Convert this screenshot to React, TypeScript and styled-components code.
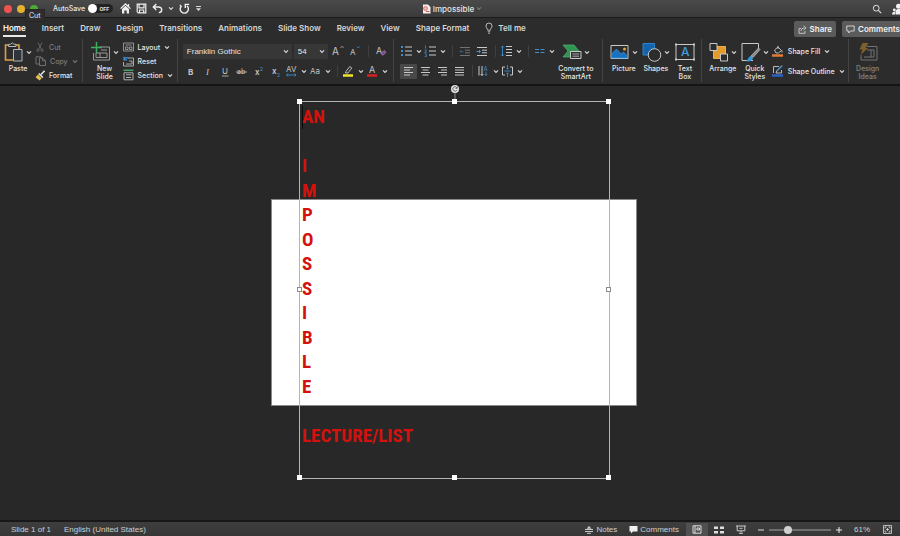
import React from "react";
import styled, { createGlobalStyle, css } from "styled-components";

const Global = createGlobalStyle`
  * { box-sizing: border-box; }
  html, body { margin: 0; background: #282828; }
  body { font-family: Inter, "Liberation Sans", sans-serif; font-size: 8px; color: #e6e6e6; overflow: hidden; }
  button, select, input { font: inherit; color: inherit; margin: 0; }
`;

const plainButton = css`
  border: 0;
  padding: 0;
  background: none;
  display: flex;
  align-items: center;
`;

const Window = styled.div`
  display: flex;
  flex-direction: column;
  height: 100vh;
`;

/* ---------- title bar ---------- */
const TitleBar = styled.header`
  display: grid;
  grid-template-columns: 1fr auto 1fr;
  align-items: center;
  height: 18px;
  flex: none;
  padding-left: 4px;
  background: linear-gradient(#4a4a4a, #3b3b3b);
  border-bottom: 1px solid #1b1b1b;
`;
const TitleLeft = styled.div`
  display: flex;
  align-items: center;
  gap: 5px;
`;
const Lights = styled.div`
  position: relative;
  display: flex;
  gap: 5px;
  margin-right: 10px;
`;
const Light = styled.button<{ $color: string }>`
  ${plainButton}
  width: 8px;
  height: 8px;
  border-radius: 50%;
  background: ${(p) => p.$color};
`;
const Tooltip = styled.span`
  position: absolute;
  z-index: 2;
  left: 21px;
  top: 4px;
  padding: 0 3px;
  font-size: 7px;
  line-height: 11px;
  background: #2e2e2e;
  border: 1px solid #262626;
  color: #eee;
`;
const AutoSave = styled.label`
  display: flex;
  align-items: center;
  gap: 3px;
  font-size: 7px;
  font-weight: 500;
  margin-right: 2px;
`;
const Toggle = styled.span`
  position: relative;
  display: flex;
  align-items: center;
  justify-content: flex-end;
  width: 25px;
  height: 9px;
  padding-right: 4px;
  border-radius: 5px;
  background: #222;
  font-size: 5px;
  font-weight: 700;
  input {
    position: absolute;
    inset: 0;
    width: 100%;
    height: 100%;
    opacity: 0;
  }
  &::before {
    content: "";
    position: absolute;
    left: 0;
    top: 0;
    width: 9px;
    height: 9px;
    border-radius: 50%;
    background: #fff;
  }
`;
const IconButton = styled.button`
  ${plainButton}
`;
const DocTitle = styled.h1`
  display: flex;
  align-items: center;
  gap: 2px;
  margin: 0;
  font-size: 8px;
  font-weight: 500;
`;
const TitleRight = styled.div`
  display: flex;
  justify-content: flex-end;
  align-items: center;
  gap: 10px;
`;

/* ---------- tabs ---------- */
const TabBar = styled.nav`
  display: flex;
  align-items: center;
  height: 20px;
  flex: none;
  padding: 2px 0 0 3px;
  gap: 16px;
  background: #2c2c2c;
`;
const Tab = styled.button<{ $active?: boolean }>`
  ${plainButton}
  height: 16px;
  gap: 5px;
  font-weight: 600;
  font-size: 8px;
  white-space: nowrap;
  color: ${(p) => (p.$active ? "#fff" : "#d6d6d6")};
  border-bottom: 2px solid ${(p) => (p.$active ? "#e8e8e8" : "transparent")};
`;
const TabActions = styled.div`
  display: flex;
  gap: 6px;
  margin-left: auto;
`;
const PillButton = styled.button`
  ${plainButton}
  gap: 3px;
  height: 16px;
  padding: 0 4px;
  border-radius: 2px;
  background: #5b5b5b;
  font-weight: 600;
  font-size: 8px;
  color: #f0f0f0;
  &:last-child { padding-right: 0; border-radius: 2px 0 0 2px; }
`;

/* ---------- ribbon ---------- */
const Ribbon = styled.div`
  display: flex;
  height: 48px;
  flex: none;
  background: #2c2c2c;
  border-bottom: 2px solid #151515;
`;
const Group = styled.section<{ $left?: number; $right?: number; $gap?: number }>`
  display: flex;
  align-items: flex-start;
  gap: ${(p) => p.$gap ?? 2}px;
  padding: 2px ${(p) => p.$right ?? 4}px 0 ${(p) => p.$left ?? 6}px;
  & + & { border-left: 1px solid transparent; border-image: linear-gradient(transparent 2px, #444 2px, #444 43px, transparent 43px) 1; }
`;
const BigButton = styled.button<{ $w: number; $dim?: boolean }>`
  ${plainButton}
  flex-direction: column;
  width: ${(p) => p.$w}px;
  padding-top: 2px;
  gap: 3px;
  font-size: 7px;
  font-weight: 500;
  line-height: 8px;
  text-align: center;
  white-space: pre;
  opacity: ${(p) => (p.$dim ? 0.45 : 1)};
`;
const IconRow = styled.span`
  display: flex;
  align-items: center;
  gap: 2px;
`;
const Stack = styled.div`
  display: flex;
  flex-direction: column;
`;
const ToolRows = styled.div`
  display: flex;
  flex-direction: column;
  gap: 4px;
  padding-top: 3px;
`;
const ToolRow = styled.div`
  display: flex;
  align-items: center;
  height: 16px;
`;
const TextButton = styled.button<{ $dim?: boolean }>`
  ${plainButton}
  height: 14px;
  gap: 4px;
  font-size: 7px;
  font-weight: 500;
  white-space: nowrap;
  color: ${(p) => (p.$dim ? "#7d7d7d" : "#e6e6e6")};
`;
const ShapeButton = styled(TextButton)`
  height: 16px;
`;
const ToolButton = styled.button<{ $on?: boolean }>`
  ${plainButton}
  justify-content: center;
  width: 17px;
  height: 15px;
  border-radius: 1px;
  background: ${(p) => (p.$on ? "#484848" : "none")};
`;
const DropTool = styled.button`
  ${plainButton}
  width: 24px;
  height: 15px;
  gap: 3px;
`;
const Sep = styled.i`
  width: 1px;
  height: 12px;
  margin: 0 4px;
  background: #3f3f3f;
`;
const SelectBox = styled.label<{ $w: number }>`
  display: flex;
  align-items: center;
  width: ${(p) => p.$w}px;
  height: 15px;
  margin-right: 2px;
  padding-right: 3px;
  background: #373737;
  select {
    flex: 1;
    min-width: 0;
    height: 15px;
    padding: 0 0 0 4px;
    border: 0;
    appearance: none;
    background: none;
    font: 500 8px "Liberation Sans", sans-serif;
  }
`;

/* ---------- canvas ---------- */
const Canvas = styled.main`
  flex: 1;
  min-height: 0;
  display: flex;
  align-items: center;
  justify-content: center;
  padding: 0 0 1px 8px;
  background: #282828;
`;
const Slide = styled.div`
  position: relative;
  flex: none;
  width: 366px;
  height: 207px;
  background: #fff;
  outline: 1px solid #8a8a8a;
  outline-offset: -1px;
`;
const TextFrame = styled.div`
  position: absolute;
  left: 28px;
  top: -98px;
  width: 311px;
  height: 378px;
  padding: 3px 2px;
  border: 1px solid #b4b4b4;
`;
const Lines = styled.div`
  display: grid;
  grid-template-rows: repeat(14, 1fr);
  align-items: center;
  height: 343px;
  font-family: "Liberation Sans Narrow", "Roboto Condensed", "Liberation Sans", sans-serif;
  font-weight: 700;
  font-size: 19px;
  line-height: 24px;
  color: #d3120e;
`;
const Caret = styled.i`
  position: absolute;
  left: 2px;
  top: 4px;
  width: 1px;
  height: 23px;
  background: #0a0a0a;
`;
const Handle = styled.i<{ $x: number; $y: number }>`
  position: absolute;
  left: ${(p) => p.$x}%;
  top: ${(p) => p.$y}%;
  width: 5px;
  height: 5px;
  margin: -3px 0 0 -3px;
  background: #fff;
  outline: ${(p) => (p.$y === 50 ? "1px solid #8c8c8c" : "none")};
  outline-offset: -1px;
`;
const Rotate = styled.svg`
  position: absolute;
  left: 50%;
  top: -18px;
  margin-left: -5px;
`;

/* ---------- status bar ---------- */
const StatusBar = styled.footer`
  display: flex;
  align-items: center;
  height: 16px;
  flex: none;
  padding: 1px 8px 0 11px;
  font-family: "Liberation Sans", sans-serif;
  font-size: 8px;
  color: #cfcfcf;
  background: linear-gradient(#3e3e3e, #363636);
  border-top: 2px solid #181818;
`;
const StatusText = styled.span`
  margin-right: 13px;
`;
const StatusTools = styled.div`
  display: flex;
  align-items: center;
  margin-left: auto;
`;
const StatusButton = styled.button<{ $gap?: number }>`
  ${plainButton}
  gap: 2px;
  margin-right: ${(p) => p.$gap ?? 0}px;
`;
const ZoomOut = styled(StatusButton)`
  margin-left: 6px;
`;
const ViewButton = styled.button<{ $on?: boolean }>`
  ${plainButton}
  justify-content: center;
  width: 22px;
  height: 13px;
  background: ${(p) => (p.$on ? "#505050" : "none")};
`;
const Zoom = styled.input`
  appearance: none;
  width: 62px;
  height: 9px;
  margin: 0 5px !important;
  background: linear-gradient(#6e6e6e, #6e6e6e) center / 100% 2px no-repeat;
  &::-webkit-slider-thumb {
    appearance: none;
    width: 8px;
    height: 8px;
    border-radius: 50%;
    background: #d0d0d0;
  }
`;
const Percent = styled.span`
  width: 17px;
  margin: 0 12px;
`;

/* ---------- icons ---------- */
type IconProps = { w: number; h: number; children: React.ReactNode };
const Svg = ({ w, h, children }: IconProps) => (
  <svg width={w} height={h} viewBox={`0 0 ${w} ${h}`} fill="none" stroke="#c8c8c8" strokeWidth="1" aria-hidden="true">
    {children}
  </svg>
);
const Chevron = ({ dim }: { dim?: boolean }) => (
  <svg width="6" height="5" viewBox="0 0 6 5" fill="none" stroke={dim ? "#777" : "#d8d8d8"} strokeWidth="1.2" aria-hidden="true">
    <path d="M1 1.300 3 3.300 5 1.300" />
  </svg>
);
const B = "#3d8fd1";

const HomeIcon = () => <Svg w={11} h={11}><path d="M.6 5.6 5.5 1l4.900 4.600M8.500 1v2.500" stroke="#eee" strokeWidth="1.300" /><path d="M2 6 5.500 2.800 9 6v4.500H6.700V7.400H4.300v3.100H2z" fill="#eee" stroke="none" /></Svg>;
const SaveIcon = () => <Svg w={11} h={11}><path d="M1.200 1.200h8.600v8.600H2.200l-1-1zM3 1.200v3.600h5V1.200M3.500 9.800V7h4.200v2.800" stroke="#eee" strokeWidth="1.200" /></Svg>;
const UndoIcon = () => <Svg w={11} h={11}><path d="M4.300 1 1.300 4l3 3M1.500 4h4.800c2 0 3.400 1.200 3.400 2.800S8.500 9.600 6.800 9.600" stroke="#eee" strokeWidth="1.400" /></Svg>;
const RedoIcon = () => <Svg w={11} h={11}><path d="M2.300 3.200A4.100 4.100 0 1 0 8 2.900M6.300 5V1.400h3.900M1 1.800l1.500 2" stroke="#eee" strokeWidth="1.400" /></Svg>;
const MoreIcon = () => <Svg w={7} h={7}><path d="M1 1.500h5" stroke="#ddd" /><path d="M1 3.200h5L3.500 6z" fill="#ddd" stroke="none" /></Svg>;
const FileIcon = () => <Svg w={9} h={10}><path d="M1 .5h5L8.500 3v6.500H1z" fill="#f4eeee" stroke="none" /><circle cx="3.500" cy="4.500" r="2" fill="#efb5b1" stroke="#d65a52" strokeWidth=".7" /><path d="M4 7.500h3.500" stroke="#d65a52" /></Svg>;
const SearchIcon = () => <Svg w={10} h={10}><circle cx="4.200" cy="4.200" r="2.900" stroke="#ddd" /><path d="M6.300 6.300 9.200 9.200" stroke="#ddd" strokeWidth="1.200" /></Svg>;
const PeopleIcon = () => <Svg w={8} h={12}><g fill="#f2f2f2" stroke="none"><circle cx="6.500" cy="3.200" r="2.500" /><path d="M3.500 11.500V8.500c0-2 1.500-2.800 4.500-2.800v5.800z" /><circle cx="2.300" cy="7" r="1.400" /><path d="M0 11.500c0-2 .8-2.800 3-2.800v2.800z" /></g></Svg>;
const BulbIcon = () => <Svg w={8} h={12}><path d="M2.700 8.200C2.700 6.500 1 6 1 4a3 3 0 0 1 6 0c0 2-1.700 2.500-1.700 4.200zM2.700 9.800h2.600M3.200 11.300h1.600" strokeWidth=".9" /></Svg>;
const ShareIcon = () => <Svg w={9} h={9}><path d="M3 3.500H1v4.800h6V6M3 6c.2-2 1.500-3 3.200-3M5.500 1 8 3 5.500 5" stroke="#ddd" strokeWidth=".8" /></Svg>;
const BubbleIcon = () => <Svg w={9} h={9}><path d="M.8 1h7.400v5H4.500L2.800 8V6h-2z" stroke="#ddd" strokeWidth=".9" /></Svg>;

const PasteIcon = () => <Svg w={20} h={20}><path d="M4.500 3H1.500v15h8M12 3h3v4" stroke="#e0a04a" strokeWidth="1.600" /><path d="M4.500 4.500V2.300h2Q8.300-.6 10 2.300h2v2.200z" stroke="#b8b8b8" /><path d="M9.500 7.500h8.500v11.500H9.500z" fill="#30353a" stroke="#a9b5bf" /></Svg>;
const CutIcon = () => <Svg w={10} h={10}><g stroke="#686868" strokeWidth=".9"><path d="M3 .5 6.300 7M7 .5 3.700 7" /><circle cx="3" cy="8.200" r="1.200" /><circle cx="7" cy="8.200" r="1.200" /></g></Svg>;
const CopyIcon = () => <Svg w={11} h={10}><g stroke="#777" strokeWidth=".9"><path d="M4 8H1V.8h5V2M4.500 2h3L10.500 4.800v4.700h-6zM7.500 2v2.800h3" /></g></Svg>;
const BrushIcon = () => <Svg w={10} h={11}><path d="M6 4.500 9.500.8" stroke="#ddd" strokeWidth="1.600" /><path d="m3.800 3.500 4 4" stroke="#e8e8e8" strokeWidth="1.600" /><path d="m3 4.500 3.700 3.800L4.500 10.500.5 7.200z" fill="#e5bd4d" stroke="none" /></Svg>;
const NewSlideIcon = () => <Svg w={20} h={20}><path d="M8 5h10.500v13H2.500V11M10 8h6M5 11h4v4.500H5zM9 11h7v4.500H9" stroke="#999" /><path d="M5.500 0v11M0 5.500h11" stroke="#3fae62" strokeWidth="1.500" /></Svg>;
const LayoutIcon = () => <Svg w={11} h={10}><path d="M.5 1h10v8H.5zM2.500 3h6M2.500 5h2.500v2.500H2.500zM6.500 5H9v2.500H6.500z" stroke="#aaa" strokeWidth=".8" /></Svg>;
const ResetIcon = () => <Svg w={11} h={11}><path d="M5 2h5.500v8H.5V6M6 5h3v3H3" stroke="#aaa" /><path d="M1 .8v3h3M1 3.500C2 1.500 4 1 5.500 2.500" stroke={B} strokeWidth="1.200" /></Svg>;
const SectionIcon = () => <Svg w={11} h={12}><path d="M.5 1.300h10" stroke="#43a868" strokeWidth="1.500" /><path d="M1 3.800h9v7H1zM3 5.800h5.500M3 8.500h5" stroke="#b0b0b0" /></Svg>;

const t = { fill: "#c4c4c4", stroke: "none", fontFamily: "Inter, sans-serif" };
const GrowIcon = () => <Svg w={13} h={12}><text x="0" y="10" fontSize="10" {...t}>A</text><path d="m8.500 2.800 1.500-1.500 1.500 1.500" strokeWidth=".8" /></Svg>;
const ShrinkIcon = () => <Svg w={12} h={12}><text x="1" y="10" fontSize="8" {...t}>A</text><path d="m8 1.500 1.300 1.300 1.300-1.300" stroke="#4f9bd6" strokeWidth=".8" /></Svg>;
const ClearIcon = () => <Svg w={13} h={12}><text x="1" y="9" fontSize="9" {...t}>A</text><path d="m6 8.500 3-3 2 1.800-3 3z" fill="#7a4a86" stroke="#b77cc4" strokeWidth=".8" /></Svg>;
const BoldIcon = () => <Svg w={10} h={11}><text x="2" y="9" fontSize="8" fontWeight="700" {...t}>B</text></Svg>;
const ItalicIcon = () => <Svg w={10} h={11}><text x="3" y="9" fontSize="9" fontStyle="italic" {...t} fontFamily="Liberation Serif, serif">I</text></Svg>;
const UnderIcon = () => <Svg w={10} h={11}><text x="2" y="8" fontSize="8" {...t}>U</text><path d="M2 10h6.500" strokeWidth=".8" /></Svg>;
const StrikeIcon = () => <Svg w={12} h={11}><text x="1" y="8" fontSize="7" {...t}>ab</text><path d="M0 6h11" strokeWidth=".8" /></Svg>;
const SupIcon = () => <Svg w={10} h={11}><text x="1" y="9" fontSize="8" fontWeight="600" {...t}>x</text><text x="6" y="5" fontSize="5" {...t} fill={B}>2</text></Svg>;
const SubIcon = () => <Svg w={10} h={11}><text x="1" y="8" fontSize="8" fontWeight="600" {...t}>x</text><text x="6" y="11" fontSize="5" {...t} fill={B}>2</text></Svg>;
const SpacingIcon = () => <Svg w={13} h={12}><text x="1" y="7" fontSize="8" {...t}>AV</text><path d="M1.500 10h9M3 8.500 1.500 10 3 11.500M9.500 8.500 11 10l-1.500 1.500" stroke={B} strokeWidth=".9" /></Svg>;
const CaseIcon = () => <Svg w={13} h={12}><text x="1" y="9" fontSize="8" {...t}>Aa</text></Svg>;
const HighlightIcon = () => <Svg w={13} h={12}><path d="m4 6.500 3.800-5 2 1.500L6 8H3.500z" strokeWidth=".9" /><path d="M1 10.500h10" stroke="#efe32c" strokeWidth="2.500" /></Svg>;
const FontColorIcon = () => <Svg w={13} h={12}><text x="3" y="8" fontSize="9" {...t}>A</text><path d="M1 10.500h10" stroke="#d91f1f" strokeWidth="2.500" /></Svg>;

const ListIcon = ({ num }: { num?: boolean }) => <Svg w={13} h={12}><path d="M5 2h7M5 6h7M5 10h7" />{num ? <path d="M1.500.5v3M.7 5h1.600v1L.7 7.500h1.800M.7 9h1.600v2.500H.7" stroke={B} strokeWidth=".8" /> : <path d="M1 2h2M1 6h2M1 10h2" stroke={B} strokeWidth="2" />}</Svg>;
const IndentIcon = ({ dim }: { dim?: boolean }) => <Svg w={12} h={11}><g opacity={dim ? 0.45 : 1}><path d="M1 1.500h10M6 4.200h5M6 6.800h5M1 9.500h10" /><path d={dim ? "M4.500 5.500H1M2.500 4 1 5.500 2.500 7" : "M.5 5.500H4.500M3 4l1.500 1.500L3 7"} stroke={B} /></g></Svg>;
const LineSpaceIcon = () => <Svg w={13} h={12}><path d="M6 1.500h6M6 4.500h6M6 7.500h6M6 10.500h6" /><path d="M2.500 1v10M1 2.500 2.500 1 4 2.500M1 9.500 2.500 11 4 9.500" stroke={B} strokeWidth=".9" /></Svg>;
const ColumnsIcon = () => <Svg w={13} h={12}><path d="M2 4.500h4M2 7.500h4M7.500 4.500h4M7.500 7.500h4" stroke={B} /></Svg>;
const AlignIcon = ({ d }: { d: string }) => <Svg w={11} h={11}><path d={d} /></Svg>;
const DirectionIcon = () => <Svg w={13} h={12}><path d="M2 1v9.500M5 1v9.500M3.700 9 5 10.500 6.300 9" /><text x="6.500" y="6" fontSize="6" {...t} fill={B}>A</text><path d="M9 6.500v4M7.800 9 9 10.500l1.200-1.500" stroke={B} strokeWidth=".8" /></Svg>;
const AlignTextIcon = () => <Svg w={13} h={12}><path d="M4 2H1.500v8H4M9 2h2.500v8H9" /><path d="M3.500 6h6M6.500 0v4M5.500 3l1 1.200 1-1.200M6.500 12V8M5.500 9l1-1.200 1 1.200" stroke={B} strokeWidth=".9" /></Svg>;
const SmartArtIcon = () => <Svg w={20} h={20}><path d="M1 3h11l5 6-5 6H1l5-6z" fill="#2f9550" stroke="#4db873" strokeWidth=".7" /><path d="M8.500 9.500h10.500v7H8.500z" fill="#333" /><path d="M10.500 12h6.500M10.500 14.200h6.500" strokeWidth=".8" /></Svg>;

const PictureIcon = () => <Svg w={20} h={20}><path d="M1 3.500h17v13H1z" /><path d="M1.500 16v-4l5-5 4.500 5 2.500-2 4 4v2z" fill="#1971c2" stroke="#3b9ae0" strokeWidth=".7" /><circle cx="14.500" cy="7" r="1.500" fill="#e3a044" stroke="none" /></Svg>;
const ShapesIcon = () => <Svg w={20} h={20}><path d="M1 1.500h11.500v11.500H1z" fill="#1464ad" stroke="#2d83cc" /><circle cx="12.500" cy="13" r="6.300" fill="#2c2c2c" /></Svg>;
const TextBoxIcon = () => <Svg w={20} h={20}><path d="M1 2.500h18v15H1z" /><path d="M0 1.500h2v2H0zM18 1.500h2v2h-2zM0 16.500h2v2H0zM18 16.500h2v2h-2z" fill="#c8c8c8" stroke="none" /><text x="6" y="14" fontSize="12" {...t} fill="#3d9be0">A</text></Svg>;
const ArrangeIcon = () => <Svg w={20} h={20}><path d="M4.500 4.500h12v12h-12z" fill="#e39b2d" stroke="#f0ad43" /><path d="M1 1.500h7v7H1zM11.500 12h7v7h-7z" fill="#2c2c2c" /></Svg>;
const StylesIcon = () => <Svg w={20} h={20}><path d="M12 18.500H1V1.500h16.500V8" /><path d="m10 14 7.500-8 1.500 1.500-7 8z" fill="#888" strokeWidth=".7" /><path d="M5 19c2-.5 2-4 4.500-5l2.500 2c-.5 3-4 4-7 3z" fill="#2f9be0" stroke="none" /></Svg>;
const FillIcon = () => <Svg w={12} h={12}><path d="M2.500 5 6 2l3.500 3.500-3 2.500H4zM6 4V.8M10 5.500v2" strokeWidth=".9" /><path d="M0 10.500h11" stroke="#e07b39" strokeWidth="2.500" /></Svg>;
const OutlineIcon = () => <Svg w={12} h={12}><path d="M7 1.500H1.500v6.500M9.500 5v3H4l1-2.500 5-5" strokeWidth=".9" /><path d="m5 6 5-5" stroke={B} strokeWidth="1.300" /><path d="M0 10.500h11" stroke="#2b62c4" strokeWidth="2.500" /></Svg>;
const IdeasIcon = () => <Svg w={20} h={20}><path d="M9 4.500h10v13.500H3V13M9 8h7v7H6M13 8v7" /><path d="M4.500 1h6L7.500 6H10L2.500 13l2-5.500H1.500z" fill="#e0a02e" stroke="none" /></Svg>;

const NotesIcon = () => <Svg w={10} h={9}><path d="M1 4.500h8M1 6.500h8M3 8.300h4" /><path d="M2.500 3.800 5 1l2.500 2.800z" fill="#ccc" stroke="none" /></Svg>;
const ChatIcon = () => <Svg w={9} h={9}><path d="M.5 1h8v5.500H4L2 8.500v-2H.5z" fill="#f0f0f0" stroke="none" /></Svg>;
const NormalIcon = () => <Svg w={10} h={9}><path d="M1 .8h8v7.400H1zM3 .8v7.400M5 3h2.500v2H5z" stroke="#ddd" /></Svg>;
const SorterIcon = () => <Svg w={10} h={8}><path d="M0 .5h4v2.500H0zM6 .5h4v2.500H6zM0 5h4v2.500H0zM6 5h4v2.500H6z" fill="#ddd" stroke="none" /></Svg>;
const ShowIcon = () => <Svg w={10} h={9}><path d="M0 1h10M1.200 1v4.800h7.600V1M5 6v1.500M3 8.300h4M3.500 3.300h3" stroke="#ccc" /></Svg>;
const FitIcon = () => <Svg w={9} h={9}><path d="M.5.500h8v8h-8z" stroke="#bbb" /><path d="M2 3.500V2h1.500M5.500 2H7v1.500M7 5.500V7H5.500M3.500 7H2V5.500M4.500 3v3M3 4.500h3" stroke="#ddd" strokeWidth=".8" /></Svg>;

/* ---------- composed pieces ---------- */
const Big = ({ w, icon, label, drop = true, dim }: { w: number; icon: React.ReactNode; label: string; drop?: boolean; dim?: boolean }) => (
  <BigButton $w={w} $dim={dim}>
    <IconRow>{icon}{drop && <Chevron />}</IconRow>
    {label}
  </BigButton>
);
const Drop = ({ label, children }: { label: string; children: React.ReactNode }) => (
  <DropTool aria-label={label}>{children}<Chevron /></DropTool>
);
const Tool = ({ label, on, children }: { label: string; on?: boolean; children: React.ReactNode }) => (
  <ToolButton aria-label={label} $on={on}>{children}</ToolButton>
);

const tabs = ["Home", "Insert", "Draw", "Design", "Transitions", "Animations", "Slide Show", "Review", "View", "Shape Format"];
const lines = ["AN", "", "I", "M", "P", "O", "S", "S", "I", "B", "L", "E", "", "LECTURE/LIST"];
const handles = [[0, 0], [50, 0], [100, 0], [0, 50], [100, 50], [0, 100], [50, 100], [100, 100]];

export default function App() {
  return (
    <Window>
      <Global />
      <TitleBar>
        <TitleLeft>
          <Lights>
            <Light $color="#ee5350" aria-label="Close" />
            <Light $color="#e3b32f" aria-label="Minimize" />
            <Light $color="#4cab35" aria-label="Full screen" />
            <Tooltip role="tooltip">Cut</Tooltip>
          </Lights>
          <AutoSave>AutoSave<Toggle><input type="checkbox" />OFF</Toggle></AutoSave>
          <IconButton aria-label="Home"><HomeIcon /></IconButton>
          <IconButton aria-label="Save"><SaveIcon /></IconButton>
          <IconButton aria-label="Undo"><UndoIcon /></IconButton>
          <Chevron />
          <IconButton aria-label="Redo"><RedoIcon /></IconButton>
          <IconButton aria-label="Customize toolbar"><MoreIcon /></IconButton>
        </TitleLeft>
        <DocTitle><FileIcon />Impossible<Chevron dim /></DocTitle>
        <TitleRight>
          <IconButton aria-label="Search"><SearchIcon /></IconButton>
          <IconButton aria-label="Collaborators"><PeopleIcon /></IconButton>
        </TitleRight>
      </TitleBar>

      <TabBar>
        {tabs.map((name) => <Tab key={name} $active={name === "Home"}>{name}</Tab>)}
        <Tab><BulbIcon />Tell me</Tab>
        <TabActions>
          <PillButton><ShareIcon />Share</PillButton>
          <PillButton><BubbleIcon />Comments</PillButton>
        </TabActions>
      </TabBar>

      <Ribbon>
        <Group $left={3}>
          <Big w={30} icon={<PasteIcon />} label="Paste" />
          <Stack>
            <TextButton $dim><CutIcon />Cut</TextButton>
            <TextButton $dim><CopyIcon />Copy<Chevron dim /></TextButton>
            <TextButton><BrushIcon />Format</TextButton>
          </Stack>
        </Group>
        <Group>
          <Big w={32} icon={<NewSlideIcon />} label={"New\nSlide"} />
          <Stack>
            <TextButton><LayoutIcon />Layout<Chevron /></TextButton>
            <TextButton><ResetIcon />Reset</TextButton>
            <TextButton><SectionIcon />Section<Chevron /></TextButton>
          </Stack>
        </Group>
        <Group $left={5} $right={3}>
          <ToolRows>
            <ToolRow>
              <SelectBox $w={109}>
                <select aria-label="Font" defaultValue="Franklin Gothic"><option>Franklin Gothic</option></select>
                <Chevron />
              </SelectBox>
              <SelectBox $w={34}>
                <select aria-label="Font size" defaultValue="54"><option>54</option></select>
                <Chevron />
              </SelectBox>
              <Tool label="Increase font size"><GrowIcon /></Tool>
              <Tool label="Decrease font size"><ShrinkIcon /></Tool>
              <Sep />
              <Tool label="Clear formatting"><ClearIcon /></Tool>
            </ToolRow>
            <ToolRow>
              <Tool label="Bold"><BoldIcon /></Tool>
              <Tool label="Italic"><ItalicIcon /></Tool>
              <Tool label="Underline"><UnderIcon /></Tool>
              <Tool label="Strikethrough"><StrikeIcon /></Tool>
              <Tool label="Superscript"><SupIcon /></Tool>
              <Tool label="Subscript"><SubIcon /></Tool>
              <Drop label="Character spacing"><SpacingIcon /></Drop>
              <Drop label="Change case"><CaseIcon /></Drop>
              <Sep />
              <Drop label="Highlight color"><HighlightIcon /></Drop>
              <Drop label="Font color"><FontColorIcon /></Drop>
            </ToolRow>
          </ToolRows>
        </Group>
        <Group $gap={0} $right={7}>
          <ToolRows>
            <ToolRow>
              <Drop label="Bullets"><ListIcon /></Drop>
              <Drop label="Numbering"><ListIcon num /></Drop>
              <Sep />
              <Tool label="Decrease indent"><IndentIcon dim /></Tool>
              <Tool label="Increase indent"><IndentIcon /></Tool>
              <Sep />
              <Drop label="Line spacing"><LineSpaceIcon /></Drop>
              <Sep />
              <Drop label="Columns"><ColumnsIcon /></Drop>
            </ToolRow>
            <ToolRow>
              <Tool label="Align left" on><AlignIcon d="M1 1.500h9M1 4h6M1 6.500h9M1 9h6" /></Tool>
              <Tool label="Center"><AlignIcon d="M1 1.500h9M2.500 4h6M1 6.500h9M2.500 9h6" /></Tool>
              <Tool label="Align right"><AlignIcon d="M1 1.500h9M4 4h6M1 6.500h9M4 9h6" /></Tool>
              <Tool label="Justify"><AlignIcon d="M1 1.500h9M1 4h9M1 6.500h9M1 9h9" /></Tool>
              <Sep />
              <Drop label="Text direction"><DirectionIcon /></Drop>
              <Drop label="Align text"><AlignTextIcon /></Drop>
            </ToolRow>
          </ToolRows>
          <Big w={38} icon={<SmartArtIcon />} label={"Convert to\nSmartArt"} />
        </Group>
        <Group>
          <Big w={30} icon={<PictureIcon />} label="Picture" />
          <Big w={30} icon={<ShapesIcon />} label="Shapes" />
          <Big w={24} icon={<TextBoxIcon />} label={"Text\nBox"} drop={false} />
        </Group>
        <Group $right={3}>
          <Big w={30} icon={<ArrangeIcon />} label="Arrange" />
          <Big w={30} icon={<StylesIcon />} label={"Quick\nStyles"} />
          <ToolRows>
            <ShapeButton><FillIcon />Shape Fill<Chevron /></ShapeButton>
            <ShapeButton><OutlineIcon />Shape Outline<Chevron /></ShapeButton>
          </ToolRows>
        </Group>
        <Group $left={5}>
          <Big w={28} icon={<IdeasIcon />} label={"Design\nIdeas"} drop={false} dim />
        </Group>
      </Ribbon>

      <Canvas>
        <Slide>
          <TextFrame>
            <Lines>{lines.map((line, i) => <span key={i}>{line}</span>)}</Lines>
            <Caret />
            <Rotate width="10" height="18" viewBox="0 0 10 18" fill="none" aria-hidden="true">
              <path d="M5 9v9" stroke="#8a8a8a" />
              <circle cx="5" cy="5" r="4" fill="#e8e8e8" />
              <path d="M6.800 3.600A2.200 2.200 0 1 0 7 5.800M7.200 2.500v1.800H5.400" stroke="#555" strokeWidth=".9" />
            </Rotate>
            {handles.map(([x, y]) => <Handle key={`${x}-${y}`} $x={x} $y={y} />)}
          </TextFrame>
        </Slide>
      </Canvas>

      <StatusBar>
        <StatusText>Slide 1 of 1</StatusText>
        <StatusText>English (United States)</StatusText>
        <StatusTools>
          <StatusButton $gap={12}><NotesIcon />Notes</StatusButton>
          <StatusButton $gap={7}><ChatIcon />Comments</StatusButton>
          <ViewButton $on aria-label="Normal view"><NormalIcon /></ViewButton>
          <ViewButton aria-label="Slide sorter"><SorterIcon /></ViewButton>
          <ViewButton aria-label="Slide show"><ShowIcon /></ViewButton>
          <ZoomOut aria-label="Zoom out"><Svg w={6} h={6}><path d="M0 3h6" stroke="#ddd" /></Svg></ZoomOut>
          <Zoom type="range" aria-label="Zoom" min={0} max={100} defaultValue={28} />
          <StatusButton aria-label="Zoom in"><Svg w={6} h={6}><path d="M0 3h6M3 0v6" stroke="#eee" /></Svg></StatusButton>
          <Percent>61%</Percent>
          <StatusButton aria-label="Fit to window"><FitIcon /></StatusButton>
        </StatusTools>
      </StatusBar>
    </Window>
  );
}
